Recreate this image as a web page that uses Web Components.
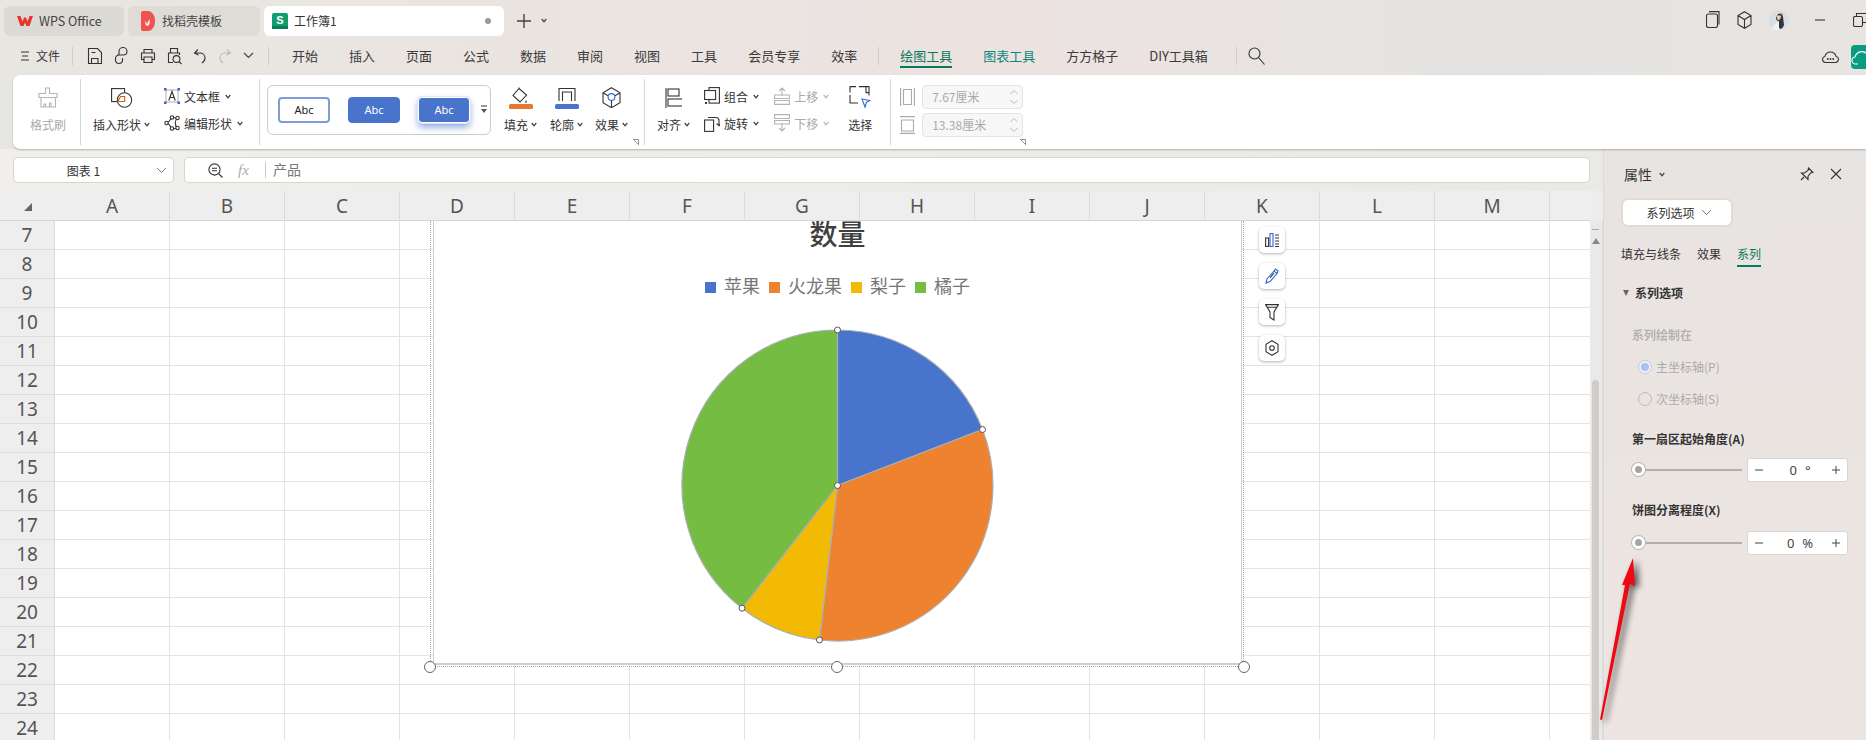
<!DOCTYPE html>
<html lang="zh">
<head>
<meta charset="utf-8">
<title>WPS</title>
<style>
  html, body { margin: 0; height: 740px; overflow: hidden; }
  body {
    font: 12px "Noto Sans CJK SC", "Noto Sans", sans-serif;
    color: #333;
    background: linear-gradient(90deg, #e8e6e1 0%, #ebe4e1 35%, #ece3e1 55%, #e4e3e1 80%, #e8e4e1 100%);
    display: flex;
    flex-direction: column;
    width: 1866px;
    position: relative;
  }
  #below { display: flex; height: 591px; }
  #left { width: 1603px; display: flex; flex-direction: column; }
</style>
</head>
<body>
  <wps-tabbar></wps-tabbar>
  <wps-menubar></wps-menubar>
  <wps-ribbon></wps-ribbon>
  <div id="below">
    <div id="left">
      <wps-formula></wps-formula>
      <wps-sheet>
        <wps-chart></wps-chart>
      </wps-sheet>
    </div>
    <wps-panel></wps-panel>
  </div>
  <red-arrow></red-arrow>

<script>
// ---- icons ----
const S = 'fill="none" stroke="#333" stroke-width="1.1"';
const G = 'fill="none" stroke="#b4b4b4" stroke-width="1.1"';
const ICONS = {
  wps: [16, 10, '<path d="M0 0h3.5l2 5.5L7 1.5h2l1.5 4L12.500 0H16l-3.500 10h-3L8 6.500 6.500 10h-3z" fill="#e8352c"/>'],
  daoke: [14, 20, '<path d="M0 2a2 2 0 0 1 2-2h5c4 0 7 4.500 7 10s-3 10-7 10H2a2 2 0 0 1-2-2z" fill="#ee5350"/><path d="M6 15c0-3 1-5 3-7-1 3 0 4-1 6zM5 15c0-2-1-3-1-5 1 1 2 2 2 4z" fill="#fff"/>'],
  sheet: [16, 16, '<rect width="16" height="16" rx="2" fill="#0e9d6c"/><rect y="13" width="16" height="3" fill="#0a7d55"/>'],
  plus: [16, 16, '<path d="M8 1v14M1 8h14" stroke="#444" stroke-width="1.4"/>'],
  chev: [6, 5, '<path d="M.7 1L3 3.700 5.300 1" fill="none" stroke="#444" stroke-width="1.200"/>'],
  chevthin: [11, 7, '<path d="M1 1l4.500 4.500L10 1" fill="none" stroke="#777" stroke-width="1"/>'],
  chevgray: [6, 5, '<path d="M.7 1L3 3.700 5.300 1" fill="none" stroke="#b8b8b8" stroke-width="1.200"/>'],
  menu: [10, 10, '<path d="M1 1h8M2 5h6M1 9h8" stroke="#333" stroke-width="1.100"/>'],
  save: [16, 18, `<path d="M1.500 1.500h9l4 4v11h-13z M4.500 16.500v-5h6.500v5M4.500 5.500h4" ${S}/>`],
  saveas: [15, 18, `<path d="M5 7.500V4.500a4 4 0 0 1 8 0c0 2.500-2 3.500-4 3.500H6a3.800 3.800 0 0 0-4.500 4v1a3.500 3.500 0 0 0 7 0v-2" ${S}/>`],
  print: [16, 16, `<path d="M4 5V1.500h8V5M4 11.500H1.500V5h13v6.500H12M4 9h8v5.500H4z" ${S}/>`],
  preview: [16, 18, `<path d="M7 15.500H2.500V6h11v2M4.500 6V1.500h7V6" ${S}/><circle cx="10.500" cy="12" r="3.400" ${S}/><path d="M13 14.500l2.500 2.500" ${S}/>`],
  undo: [14, 16, `<path d="M5 1.500L1.500 5 5.500 7M1.500 5h6a5 5 0 0 1 4.500 5c0 2-1.500 4-3 5" ${S}/>`],
  redo: [14, 16, `<path d="M9 1.500L12.500 5 8.500 7M12.500 5h-6A5 5 0 0 0 2 10c0 2 1.500 4 3 5" fill="none" stroke="#bbb" stroke-width="1.100"/>`],
  chevdark: [11, 7, '<path d="M1 1l4.500 4.500L10 1" fill="none" stroke="#444" stroke-width="1.200"/>'],
  search: [17, 18, `<circle cx="6.500" cy="6.500" r="5.500" ${S}/><path d="M10.500 10.500l6 7" ${S}/>`],
  pages: [14, 17, `<rect x=".5" y="3" width="11" height="13.500" rx="2" ${S}/><path d="M3 .6h10v13" ${S}/>`],
  cube: [15, 18, `<path d="M7.500 .7l6.500 3.800v9L7.500 17.300 1 13.500v-9zM1 4.500l6.500 4 6.500-4M7.500 8.500v8.800" ${S}/>`],
  minimize: [10, 2, '<path d="M0 1h10" stroke="#333" stroke-width="1.100"/>'],
  restore: [14, 14, `<rect x=".5" y="3.500" width="9" height="10" rx="1.500" ${S}/><path d="M3.500 3V.5h10v9h-3.500" ${S}/>`],
  chat: [17, 16, `<path d="M3.500 14.500a3.200 3.200 0 0 1-.5-6.300A5.700 5.700 0 0 1 14 8.200a3.200 3.200 0 0 1-.5 6.300z" ${S}/><circle cx="5.800" cy="11" r=".9" fill="#333"/><circle cx="8.500" cy="11" r=".9" fill="#333"/><circle cx="11.200" cy="11" r=".9" fill="#333"/>`],
  brush: [20, 21, `<path d="M7.500 1h4v5.500H19v4H1v-4h6.500zM3 10.500V20h3v-3h1.500v3h4v-4H13v4h4.500v-9.500" ${G}/>`],
  shape: [22, 20, `<rect x=".6" y=".6" width="13" height="13" ${S}/><circle cx="13.500" cy="12" r="7.200" fill="#fff" stroke="#333" stroke-width="1.100"/><path d="M7 13.500l2.500-5 4.200 0v5z" fill="#fff" stroke="#d9591f" stroke-width="1.100"/>`],
  textbox: [16, 16, `<path d="M2 2v12M14 2v12M2 2h12M2 14h12" stroke="#999" stroke-width=".8"/><rect x="0" y="0" width="2.500" height="2.500" fill="#3465d8"/><rect x="13.500" y="0" width="2.500" height="2.500" fill="#3465d8"/><rect x="0" y="13.500" width="2.500" height="2.500" fill="#3465d8"/><rect x="13.500" y="13.500" width="2.500" height="2.500" fill="#3465d8"/><path d="M4.800 12.500L8 3.500l3.200 9M6 9.500h4" ${S}/>`],
  editshape: [16, 16, `<path d="M3 8c3-1 3-4 5-5.500 1.500 0 3 0 5 .5-2 3-2 7 0 10-3 1-4 1-5 .5C6 11.500 6 9 3 8z" ${S}/><circle cx="2.500" cy="8" r="1.700" fill="#fff" ${S}/><circle cx="8" cy="2.500" r="1.700" fill="#fff" ${S}/><circle cx="13.500" cy="3" r="1.700" fill="#fff" ${S}/><circle cx="8" cy="13.500" r="1.700" fill="#fff" ${S}/><circle cx="13.500" cy="13" r="1.700" fill="#fff" ${S}/>`],
  more: [8, 9, '<path d="M1 1h6" stroke="#555" stroke-width="1.200"/><path d="M1 4h6L4 8z" fill="#555"/>'],
  fill: [24, 22, `<path d="M10 1.500l7.500 6.500-6.500 7-7-6.500zM10 1.500V.5M17 13.500v2.500" ${S}/><rect y="17" width="24" height="5" rx="1.500" fill="#e8772e"/>`],
  outline: [24, 22, `<path d="M4 14V1.500h16V14M7.500 14V5h9v9" ${S}/><rect y="17" width="24" height="5" rx="1.500" fill="#4874cb"/>`],
  effect: [19, 21, `<path d="M9.500 .7l8.500 5v10l-8.500 5-8.500-5v-10zM1 5.700l5 3M18 5.700l-5 3M9.500 14v6.800" ${S}/><circle cx="9.500" cy="10" r="3.400" fill="#fff" stroke="#3465d8" stroke-width="1.100"/>`],
  align: [17, 20, `<path d="M1 0v20" ${S}/><rect x="3" y="1" width="11" height="7" ${S}/><rect x="3" y="11" width="15" height="7" ${S}/>`],
  group: [16, 18, `<rect x="5" y=".6" width="10.400" height="15.500" ${S}/><rect x=".6" y="3.500" width="11" height="9" fill="#fff" ${S}/><rect x="1" y="15" width="2" height="2" fill="#333"/>`],
  rotate: [16, 18, `<rect x=".6" y="6" width="9" height="11.400" ${S}/><path d="M4 3.500h8a3 3 0 0 1 3 3v5M12.700 9.500l2.300 2.300 2-2.300" ${S}/>`],
  up: [16, 18, `<path d="M8 9V1.500M5 4l3-3 3 3M.6 8h14.800v3.500H.6zM.6 13.500h14.800v3.900H.6z" ${G}/>`],
  down: [16, 18, `<path d="M.6 .6h14.800v3.900H.6zM.6 6.500h14.800V10H.6zM8 9v7.500M5 14l3 3 3-3" ${G}/>`],
  select: [22, 24, `<path d="M7 .6H1v6M1 9v8h8M10 .6h10v9M17 .6v6h3" ${S}/><path d="M13 13l8 1.500-3.500 1.800L16 21z" fill="#fff" stroke="#3465d8" stroke-width="1.100"/>`],
  szw: [15, 18, `<path d="M.6 0v18M14.400 0v18M3.500 1.500h8v15h-8z" fill="none" stroke="#aaa" stroke-width="1.100"/>`],
  szh: [15, 18, `<path d="M0 .6h15M0 17.400h15M1.500 4h12v11h-12z" fill="none" stroke="#aaa" stroke-width="1.100"/>`],
  launcher: [6, 6, '<path d="M0 .5h5.500V6M1 1l4 4" fill="none" stroke="#777" stroke-width=".8"/>'],
  zoomout: [15, 15, `<circle cx="6.500" cy="6.500" r="5.600" ${S}/><path d="M10.500 10.500l4 4M4 5.300h5M4 7.800h5" ${S}/>`],
  pin: [14, 14, `<path d="M8.500 1l4.500 4.500-2.500.5L8 9.500v3L1.500 6h3L8 3.500zM4 10L1 13" ${S}/>`],
  close: [12, 12, `<path d="M1 1l10 10M11 1L1 11" ${S}/>`],
  elements: [14, 14, `<rect x=".6" y="5" width="3" height="8.400" ${S}/><rect x="5" y=".6" width="3" height="12.800" fill="none" stroke="#3465d8" stroke-width="1.100"/><path d="M10 2h4M10 5h4M10 8h4M10 11h4M10 13.500h4" ${S}/>`],
  pen: [14, 16, `<path d="M1 15l1-4 7-8 3 2.500-7 8zM9 3l1.500-2 2.500 2-1 2.500" fill="none" stroke="#3465d8" stroke-width="1.100"/><path d="M5 10l4-5" ${S}/>`],
  funnel: [14, 17, `<path d="M.6 .6h12.800L9 8v8l-4-2.500V8zM2.500 3.200h9" ${S}/>`],
  hex: [14, 16, `<path d="M7 .7l6 3.500v7.600l-6 3.500-6-3.500V4.200z" ${S}/><circle cx="7" cy="8" r="2.300" ${S}/>`],
  avatar: [20, 20, '<circle cx="10" cy="10" r="10" fill="#d5dfe5"/><path d="M9 4c3-1.500 5 0 5 3l1 8c-1 3-3 4-4 4-2-3-1-6-1-8-2 0-3-1-3-3z" fill="#35323a"/><path d="M8 6c1-1 3-1 4 0 0 2-1 4-2.500 4S8 8 8 6z" fill="#e9c8b8"/><path d="M11 3l3 0 0 3z" fill="#d8b13c"/><path d="M3 20c1-5 4-8 7-8v8z" fill="#eef3f6"/>']
};

class WpsIcon extends HTMLElement {
  constructor() {
    super();
    const [w, h, body] = ICONS[this.getAttribute('name')];
    this.attachShadow({ mode: 'open' }).innerHTML = `
      <style>:host { display: inline-flex; flex: none; } svg { display: block; }</style>
      <svg width="${w}" height="${h}" viewBox="0 0 ${w} ${h}">${body}</svg>`;
  }
}
customElements.define('wps-icon', WpsIcon);

// ---- title tabs ----
class WpsTabbar extends HTMLElement {
  constructor() {
    super();
    this.attachShadow({ mode: 'open' }).innerHTML = `
      <style>
        :host { display: flex; align-items: center; height: 41px; padding: 1px 0 0 4px; box-sizing: border-box; font-size: 12px; }
        .tab { height: 30px; border-radius: 6px; background: #dcdad5; display: flex; align-items: center; box-sizing: border-box; margin-right: 4px; color: #444; }
        .wps { width: 120px; padding-left: 13px; gap: 6px; font-size: 12.500px; }
        .tpl { width: 132px; padding-left: 13px; gap: 7px; background: #dfdbd7; }
        .cur { width: 240px; padding-left: 8px; gap: 6px; background: #fff; color: #333; position: relative; }
        .s { position: relative; display: flex; }
        .s span { position: absolute; inset: 0; text-align: center; color: #fff; font: bold 11px/15px "Liberation Sans", sans-serif; }
        .dot { width: 6px; height: 6px; border-radius: 50%; background: #999; margin-left: auto; margin-right: 13px; }
        .new { margin-left: 8px; margin-right: 9px; }
        .right { margin-left: auto; display: flex; align-items: center; margin-top: -2px; }
      </style>
      <div class="tab wps"><wps-icon name="wps"></wps-icon><span>WPS Office</span></div>
      <div class="tab tpl"><wps-icon name="daoke"></wps-icon><span>找稻壳模板</span></div>
      <div class="tab cur"><span class="s"><wps-icon name="sheet"></wps-icon><span>S</span></span><span>工作簿1</span><i class="dot"></i></div>
      <wps-icon class="new" name="plus"></wps-icon><wps-icon name="chev"></wps-icon>
      <div class="right">
        <wps-icon name="pages"></wps-icon>
        <wps-icon name="cube" style="margin-left:17px"></wps-icon>
        <wps-icon name="avatar" style="margin:0 26px 0 17px"></wps-icon>
        <wps-icon name="minimize"></wps-icon>
        <wps-icon name="restore" style="margin:0 -1px 0 28px"></wps-icon>
      </div>`;
  }
}
customElements.define('wps-tabbar', WpsTabbar);

// ---- menu row ----
class WpsMenubar extends HTMLElement {
  constructor() {
    super();
    const tabs = ['开始', '插入', '页面', '公式', '数据', '审阅', '视图', '工具', '会员专享', '效率'];
    this.attachShadow({ mode: 'open' }).innerHTML = `
      <style>
        :host { display: flex; align-items: center; height: 34px; font-size: 13px; box-sizing: border-box; padding: 0 0 4px 20px; color: #3a3a3a; }
        .sep { width: 1px; height: 18px; background: #cfcbc7; flex: none; }
        .file { display: flex; align-items: center; gap: 6px; font-size: 12px; width: 52px; }
        .qa { display: flex; align-items: center; margin-left: 14px; width: 181px; justify-content: space-between; padding-right: 14px; box-sizing: border-box; }
        .tabs { display: flex; gap: 31px; margin-left: 23px; margin-right: 21px; }
        .tabs2 { display: flex; margin-left: 21px; }
        .t { position: relative; margin-right: 31px; }
        .on { color: #08785f; }
        .on::after { content: ""; position: absolute; left: 0; right: 0; top: 20px; height: 2px; background: #08785f; }
        .chart { color: #09887a; }
        .end { margin-left: auto; display: flex; align-items: center; }
        .cloud { width: 15px; height: 24px; background: #0a9b80; border-radius: 4px 0 0 4px; margin-left: 12px; overflow: hidden; margin-top: 2px; }
        .cloud path { fill: none; stroke: #fff; stroke-width: 1.100; }
      </style>
      <div class="file"><wps-icon name="menu"></wps-icon><span>文件</span></div>
      <div class="sep"></div>
      <div class="qa">
        <wps-icon name="save"></wps-icon><wps-icon name="saveas"></wps-icon><wps-icon name="print"></wps-icon>
        <wps-icon name="preview"></wps-icon><wps-icon name="undo"></wps-icon><wps-icon name="redo"></wps-icon><wps-icon name="chevdark"></wps-icon>
      </div>
      <div class="sep"></div>
      <div class="tabs">${tabs.map(t => `<span>${t}</span>`).join('')}</div>
      <div class="sep"></div>
      <div class="tabs2">
        <span class="t on">绘图工具</span><span class="t chart">图表工具</span><span class="t">方方格子</span><span class="t" style="margin-right:28px">DIY工具箱</span>
      </div>
      <div class="sep"></div>
      <wps-icon name="search" style="margin-left:11px"></wps-icon>
      <div class="end">
        <wps-icon name="chat"></wps-icon>
        <div class="cloud"><svg width="15" height="24"><path d="M7 19H5a3.500 3.500 0 0 1-1-7 7 7 0 0 1 12-3"/></svg></div>
      </div>`;
  }
}
customElements.define('wps-menubar', WpsMenubar);

// ---- ribbon ----
class RbBig extends HTMLElement {
  constructor() {
    super();
    const off = this.hasAttribute('disabled');
    const chev = this.hasAttribute('chev') ? '<wps-icon name="chev" style="margin-left:3px"></wps-icon>' : '';
    this.attachShadow({ mode: 'open' }).innerHTML = `
      <style>
        :host { display: grid; grid-template-rows: 28px 25px; justify-items: center; align-items: center; flex: none; padding-top: 5px; font-size: 12px; color: ${off ? '#aaa' : '#333'}; }
        div { display: flex; align-items: center; white-space: nowrap; }
      </style>
      <slot></slot>
      <div>${this.getAttribute('label')}${chev}</div>`;
  }
}
customElements.define('rb-big', RbBig);

class RbSmall extends HTMLElement {
  constructor() {
    super();
    const off = this.hasAttribute('disabled');
    const chev = this.hasAttribute('chev') ? `<wps-icon name="${off ? 'chevgray' : 'chev'}" style="margin-left:5px"></wps-icon>` : '';
    this.attachShadow({ mode: 'open' }).innerHTML = `
      <style>
        :host { display: flex; align-items: center; height: 27px; font-size: 12px; gap: 4px; white-space: nowrap; color: ${off ? '#aaa' : '#333'}; }
        span { display: flex; align-items: center; }
      </style>
      <slot></slot>
      <span>${this.getAttribute('label')}${chev}</span>`;
  }
}
customElements.define('rb-small', RbSmall);

class RbSize extends HTMLElement {
  constructor() {
    super();
    this.attachShadow({ mode: 'open' }).innerHTML = `
      <style>
        :host { display: block; width: 101px; height: 24px; box-sizing: border-box; border: 1px solid #e4e4e4; border-radius: 4px; background: #f7f7f7; color: #aaa; font-size: 12px; line-height: 22px; padding-left: 9px; position: relative; }
        svg { position: absolute; right: 3px; top: 3px; }
      </style>
      <slot></slot>
      <svg width="10" height="16"><path d="M1.500 5L5 1.500 8.500 5M1.500 11L5 14.500 8.500 11" fill="none" stroke="#bbb"/></svg>`;
  }
}
customElements.define('rb-size', RbSize);

class WpsRibbon extends HTMLElement {
  constructor() {
    super();
    this.attachShadow({ mode: 'open' }).innerHTML = `
      <style>
        :host { display: flex; align-items: flex-start; height: 75px; margin-left: 13px; box-sizing: border-box; padding-top: 4px; background: #fff; border-radius: 7px 0 0 7px; box-shadow: 0 1px 2px rgba(0,0,0,.25); position: relative; }
        .sep { width: 1px; height: 66px; background: #d6d6d6; flex: none; }
        .col { display: flex; flex-direction: column; padding-top: 4px; flex: none; }
        .gallery { width: 224px; height: 50px; margin: 6px 0 0 7px; box-sizing: border-box; border: 1px solid #cdcdcd; border-radius: 6px; display: flex; align-items: center; padding-left: 10px; flex: none; position: relative; }
        .abc { width: 52px; height: 26px; box-sizing: border-box; border-radius: 4px; font: 11px/24px "Noto Sans", sans-serif; text-align: center; color: #fff; background: #4874cb; border: 1px solid #4874cb; margin-right: 18px; }
        .abc.a { background: #fff; color: #222; border: 2px solid #7f9cd9; line-height: 22px; }
        .abc.c { border: 1px solid #fff; box-shadow: 0 0 0 1px #dfe6f5, 0 4px 7px rgba(72,116,203,.65); }
        .more { position: absolute; right: 2px; top: 19px; }
        .launch { position: absolute; top: 64px; }
        .sz { display: flex; align-items: center; gap: 7px; height: 24px; margin-bottom: 4px; }
      </style>
      <rb-big label="格式刷" disabled style="margin-left:17px"><wps-icon name="brush"></wps-icon></rb-big>
      <div class="sep" style="margin-left:14px"></div>
      <rb-big label="插入形状" chev style="margin-left:12px"><wps-icon name="shape"></wps-icon></rb-big>
      <div class="col" style="margin-left:14px">
        <rb-small label="文本框" chev><wps-icon name="textbox"></wps-icon></rb-small>
        <rb-small label="编辑形状" chev><wps-icon name="editshape"></wps-icon></rb-small>
      </div>
      <div class="sep" style="margin-left:16px"></div>
      <div class="gallery">
        <div class="abc a">Abc</div><div class="abc">Abc</div><div class="abc c">Abc</div>
        <wps-icon class="more" name="more"></wps-icon>
      </div>
      <rb-big label="填充" chev style="margin-left:13px"><wps-icon name="fill"></wps-icon></rb-big>
      <rb-big label="轮廓" chev style="margin-left:13px"><wps-icon name="outline"></wps-icon></rb-big>
      <rb-big label="效果" chev style="margin-left:12px"><wps-icon name="effect"></wps-icon></rb-big>
      <div class="sep" style="margin-left:16px"></div>
      <rb-big label="对齐" chev style="margin-left:12px"><wps-icon name="align"></wps-icon></rb-big>
      <div class="col" style="margin-left:14px">
        <rb-small label="组合" chev><wps-icon name="group"></wps-icon></rb-small>
        <rb-small label="旋转" chev><wps-icon name="rotate"></wps-icon></rb-small>
      </div>
      <div class="col" style="margin-left:15px">
        <rb-small label="上移" chev disabled><wps-icon name="up"></wps-icon></rb-small>
        <rb-small label="下移" chev disabled><wps-icon name="down"></wps-icon></rb-small>
      </div>
      <rb-big label="选择" style="margin-left:19px"><wps-icon name="select"></wps-icon></rb-big>
      <div class="sep" style="margin-left:18px"></div>
      <div class="col" style="margin-left:9px;padding-top:6px">
        <div class="sz"><wps-icon name="szw"></wps-icon><rb-size>7.67厘米</rb-size></div>
        <div class="sz"><wps-icon name="szh"></wps-icon><rb-size>13.38厘米</rb-size></div>
      </div>
      <wps-icon class="launch" name="launcher" style="left:620px"></wps-icon>
      <wps-icon class="launch" name="launcher" style="left:1007px"></wps-icon>`;
  }
}
customElements.define('wps-ribbon', WpsRibbon);

// ---- name box and formula ----
class WpsFormula extends HTMLElement {
  constructor() {
    super();
    this.attachShadow({ mode: 'open' }).innerHTML = `
      <style>
        :host { display: flex; height: 42px; box-sizing: border-box; padding: 8px 13px 8px 13px; gap: 10px; background: linear-gradient(90deg, #f0efec, #ebe9e6); }
        .box { height: 26px; background: #fff; border: 1px solid #d8d6d3; border-radius: 5px; box-sizing: border-box; display: flex; align-items: center; }
        .name { width: 161px; justify-content: center; position: relative; font-size: 12px; padding-right: 20px; }
        .name wps-icon { position: absolute; right: 6px; top: 9px; }
        .f { flex: 1; padding-left: 23px; font-size: 14px; color: #777; }
        .f span.t { margin-top: -2px; }
        .fx { font: italic 15px "Liberation Serif", serif; color: #aaa; margin-left: 15px; width: 14px; }
        .bar { width: 1px; height: 16px; background: #ccc; margin: 0 7px 0 13px; }
      </style>
      <div class="box name">图表 1<wps-icon name="chevthin"></wps-icon></div>
      <div class="box f"><wps-icon name="zoomout"></wps-icon><span class="fx">fx</span><i class="bar"></i><span class="t">产品</span></div>`;
  }
}
customElements.define('wps-formula', WpsFormula);

// ---- spreadsheet grid ----
class WpsSheet extends HTMLElement {
  constructor() {
    super();
    const cols = 'ABCDEFGHIJKLMN'.split('');
    let cells = '<div class="hd corner"><svg width="10" height="10"><path d="M9 1v8H1z" fill="#666"/></svg></div>';
    cols.forEach((c, i) => { cells += `<div class="hd">${i < 13 ? c : ''}</div>`; });
    for (let r = 7; r <= 24; r++) {
      cells += `<div class="rh">${r}</div>` + cols.map(() => '<div class="c"></div>').join('');
    }
    this.attachShadow({ mode: 'open' }).innerHTML = `
      <style>
        :host { display: flex; flex: 1; min-height: 0; position: relative; overflow: hidden; background: #fff; }
        .grid { width: 1590px; overflow: hidden; flex: none; display: grid; grid-template-columns: 55px repeat(14, 115px); grid-template-rows: 30px; grid-auto-rows: 29px; font-family: "Noto Sans", sans-serif; color: #555; }
        .hd { background: #eee; border-right: 1px solid #dcdcdc; border-bottom: 1px solid #d6d6d6; box-sizing: border-box; font-size: 19px; display: flex; align-items: center; justify-content: center; }
        .corner { border-right: 0; padding-top: 2px; }
        .rh { background: #eee; border-bottom: 1px solid #dedede; border-right: 1px solid #dcdcdc; box-sizing: border-box; font-size: 19px; display: flex; align-items: center; justify-content: center; }
        .c { border-right: 1px solid #e3e3e3; border-bottom: 1px solid #e3e3e3; box-sizing: border-box; }
        .bar { width: 13px; position: relative; background: #ebe9e7; margin-top: 30px; border-right: 1px solid #ddd; box-sizing: border-box; }
        .bar i { position: absolute; left: 2px; width: 7px; top: 159px; bottom: 0; background: #cfccc9; border-radius: 4px 4px 0 0; }
        .bar b { position: absolute; left: 2px; width: 7px; top: 8px; height: 1px; background: #aaa; }
        .bar svg { position: absolute; left: 2px; top: 17px; }
        .head { position: absolute; left: 1590px; width: 13px; top: 0; height: 30px; background: #eeedeb; }
        .over { position: absolute; left: 0; top: 30px; right: 0; bottom: 0; overflow: hidden; }
      </style>
      <div class="grid">${cells}</div>
      <div class="bar"><b></b><svg width="8" height="6"><path d="M4 0l4 6H0z" fill="#888"/></svg><i></i></div>
      <div class="head"></div>
      <div class="over"><slot></slot></div>`;
  }
}
customElements.define('wps-sheet', WpsSheet);

// ---- pie chart ----
class WpsChart extends HTMLElement {
  constructor() {
    super();
    const cx = 165.5, cy = 166.5, r = 155.5;
    const pts = [[0, -155.5], [145, -56], [-18, 154.5], [-95.5, 122.7]].map(p => [cx + p[0], cy + p[1]]);
    const colors = ['#4874cb', '#ee822f', '#f2ba02', '#75bd42'];
    let slices = '';
    pts.forEach((p, i) => {
      const q = pts[(i + 1) % 4];
      slices += `<path d="M${cx} ${cy}L${p[0]} ${p[1]}A${r} ${r} 0 0 1 ${q[0]} ${q[1]}Z" fill="${colors[i]}" stroke="#a9aeb4" stroke-width="1.2"/>`;
    });
    const knobs = pts.concat([[cx, cy]]).map(p => `<circle cx="${p[0]}" cy="${p[1]}" r="3" fill="#fff" stroke="#555" stroke-width="1"/>`).join('');
    const legend = [['苹果', colors[0]], ['火龙果', colors[1]], ['梨子', colors[2]], ['橘子', colors[3]]]
      .map(l => `<span class="it"><i style="background:${l[1]}"></i>${l[0]}</span>`).join('');
    this.attachShadow({ mode: 'open' }).innerHTML = `
      <style>
        :host { display: block; position: absolute; left: 433px; top: 0; width: 809px; height: 444px; }
        .plot { position: absolute; inset: 0; background: #fff; border: solid #cfcfcf; border-width: 0 1px 2px 1px; box-sizing: border-box; overflow: hidden; display: flex; flex-direction: column; align-items: center; font-family: "Liberation Serif", "Noto Sans CJK SC", serif; }
        .title { font-size: 28px; line-height: 32px; margin-top: -1px; color: #404040; font-weight: 500; }
        .legend { display: flex; gap: 9px; margin-top: 26px; font-size: 18px; line-height: 18px; color: #777; }
        .it { display: flex; align-items: center; gap: 8px; }
        .it i { width: 11px; height: 11px; }
        svg.pie { margin-top: 23px; flex: none; }
        .dots { position: absolute; left: -3px; right: -2px; top: 0; bottom: -2px; border: 1px dotted #aaa; border-top: 0; box-sizing: border-box; pointer-events: none; }
        .h { position: absolute; top: 440px; width: 12px; height: 12px; box-sizing: border-box; border: 1px solid #666; border-radius: 50%; background: #fff; }
        .tools { position: absolute; left: 826px; top: 6px; display: flex; flex-direction: column; gap: 10px; }
        .tools div { width: 26px; height: 26px; background: #fff; border-radius: 5px; box-shadow: 0 1px 3px rgba(0,0,0,.3); display: flex; align-items: center; justify-content: center; }
      </style>
      <div class="dots"></div>
      <div class="plot">
        <div class="title">数量</div>
        <div class="legend">${legend}</div>
        <svg class="pie" width="332" height="332">${slices}${knobs}</svg>
      </div>
      <i class="h" style="left:-9px"></i><i class="h" style="left:398px"></i><i class="h" style="left:805px"></i>
      <div class="tools">
        <div><wps-icon name="elements"></wps-icon></div>
        <div><wps-icon name="pen"></wps-icon></div>
        <div><wps-icon name="funnel"></wps-icon></div>
        <div><wps-icon name="hex"></wps-icon></div>
      </div>`;
  }
}
customElements.define('wps-chart', WpsChart);

// ---- properties panel ----
class WpsSlider extends HTMLElement {
  constructor() {
    super();
    this.attachShadow({ mode: 'open' }).innerHTML = `
      <style>
        :host { display: flex; align-items: center; height: 24px; gap: 5px; font-family: "Noto Sans", sans-serif; }
        .track { width: 110px; height: 2px; background: #b3aeab; position: relative; }
        .track i { position: absolute; left: 0; top: -6px; width: 13px; height: 13px; box-sizing: border-box; border-radius: 50%; background: #a5a5a5; border: 3px solid #fff; box-shadow: 0 0 0 1px #bdb9b6; }
        .box { width: 101px; height: 24px; box-sizing: border-box; background: #fff; border: 1px solid #d9d5d2; border-radius: 3px; display: flex; align-items: center; font-size: 13px; color: #444; padding: 0 6px; }
        .val { flex: 1; display: flex; justify-content: center; gap: 8px; margin-left: 5px; }
        svg { flex: none; }
      </style>
      <div class="track"><i></i></div>
      <div class="box">
        <svg width="10" height="10"><path d="M1 5h8" stroke="#444"/></svg>
        <span class="val"><span>0</span><span>${this.getAttribute('unit')}</span></span>
        <svg width="10" height="10"><path d="M1 5h8M5 1v8" stroke="#444"/></svg>
      </div>`;
  }
}
customElements.define('wps-slider', WpsSlider);

class WpsRadio extends HTMLElement {
  constructor() {
    super();
    const on = this.hasAttribute('checked');
    this.attachShadow({ mode: 'open' }).innerHTML = `
      <style>
        :host { display: flex; align-items: center; height: 18px; gap: 4px; color: #aaa; margin-left: 6px; }
        i { width: 14px; height: 14px; box-sizing: border-box; border-radius: 50%; border: 1px solid ${on ? '#b9cdf0' : '#bbb'}; display: flex; align-items: center; justify-content: center; background: ${on ? '#f1f1f3' : 'transparent'}; }
        b { width: 8px; height: 8px; border-radius: 50%; background: #a9c2ee; display: ${on ? 'block' : 'none'}; }
      </style>
      <i><b></b></i><span><slot></slot></span>`;
  }
}
customElements.define('wps-radio', WpsRadio);

class WpsPanel extends HTMLElement {
  constructor() {
    super();
    this.attachShadow({ mode: 'open' }).innerHTML = `
      <style>
        :host { display: block; width: 263px; box-sizing: border-box; border-left: 1px solid #dcdad8; background: linear-gradient(180deg, #e8e4e1, #ede5e2); font-size: 12px; line-height: 18px; color: #333; padding-left: 28px; }
        .head { display: flex; align-items: center; height: 20px; margin: 15px 0 0 -8px; font-size: 14px; gap: 7px; }
        .head .r { margin-left: auto; margin-right: 24px; display: flex; gap: 16px; align-items: center; }
        .dd { width: 112px; height: 29px; box-sizing: border-box; margin: 14px 0 0 -11px; background: #fff; border: 2px solid #dfdbd8; border-radius: 7px; display: flex; align-items: center; justify-content: center; gap: 6px; padding-left: 4px; }
        .tabs { display: flex; gap: 16px; margin: 18px 0 0 -11px; }
        .tabs span { height: 22px; box-sizing: border-box; }
        .tabs .on { color: #08785f; border-bottom: 2px solid #08785f; }
        .sec { margin: 17px 0 0 -9px; display: flex; align-items: center; gap: 6px; font-weight: 700; }
        .sec svg { flex: none; }
        .muted { color: #aaa; margin-top: 24px; font-weight: 700; opacity: .85; }
        .lbl { font-weight: 700; }
      </style>
      <div class="head"><span>属性</span><wps-icon name="chev"></wps-icon><span class="r"><wps-icon name="pin"></wps-icon><wps-icon name="close"></wps-icon></span></div>
      <div class="dd"><span>系列选项</span><wps-icon name="chevthin"></wps-icon></div>
      <div class="tabs"><span>填充与线条</span><span>效果</span><span class="on">系列</span></div>
      <div class="sec"><svg width="6" height="6"><path d="M0 0h6L3 6z" fill="#666"/></svg><span>系列选项</span></div>
      <div class="muted">系列绘制在</div>
      <wps-radio checked style="margin-top:14px">主坐标轴(P)</wps-radio>
      <wps-radio style="margin-top:14px">次坐标轴(S)</wps-radio>
      <div class="lbl" style="margin-top:22px">第一扇区起始角度(A)</div>
      <wps-slider unit="°" style="margin-top:10px"></wps-slider>
      <div class="lbl" style="margin-top:19px">饼图分离程度(X)</div>
      <wps-slider unit="%" style="margin-top:12px"></wps-slider>`;
  }
}
customElements.define('wps-panel', WpsPanel);

// ---- the red arrow drawn over the screenshot ----
class RedArrow extends HTMLElement {
  constructor() {
    super();
    this.attachShadow({ mode: 'open' }).innerHTML = `
      <style>
        :host { display: block; position: absolute; left: 1590px; top: 550px; width: 60px; height: 180px; pointer-events: none; }
        svg { filter: drop-shadow(4px 2px 3px rgba(0,0,0,.65)); overflow: visible; }
      </style>
      <svg width="60" height="180"><path d="M10 169.5L35 35 32 35 43 8 45 36 40 34 12 170z" fill="#ee0a12"/></svg>`;
  }
}
customElements.define('red-arrow', RedArrow);
</script>
</body>
</html>
